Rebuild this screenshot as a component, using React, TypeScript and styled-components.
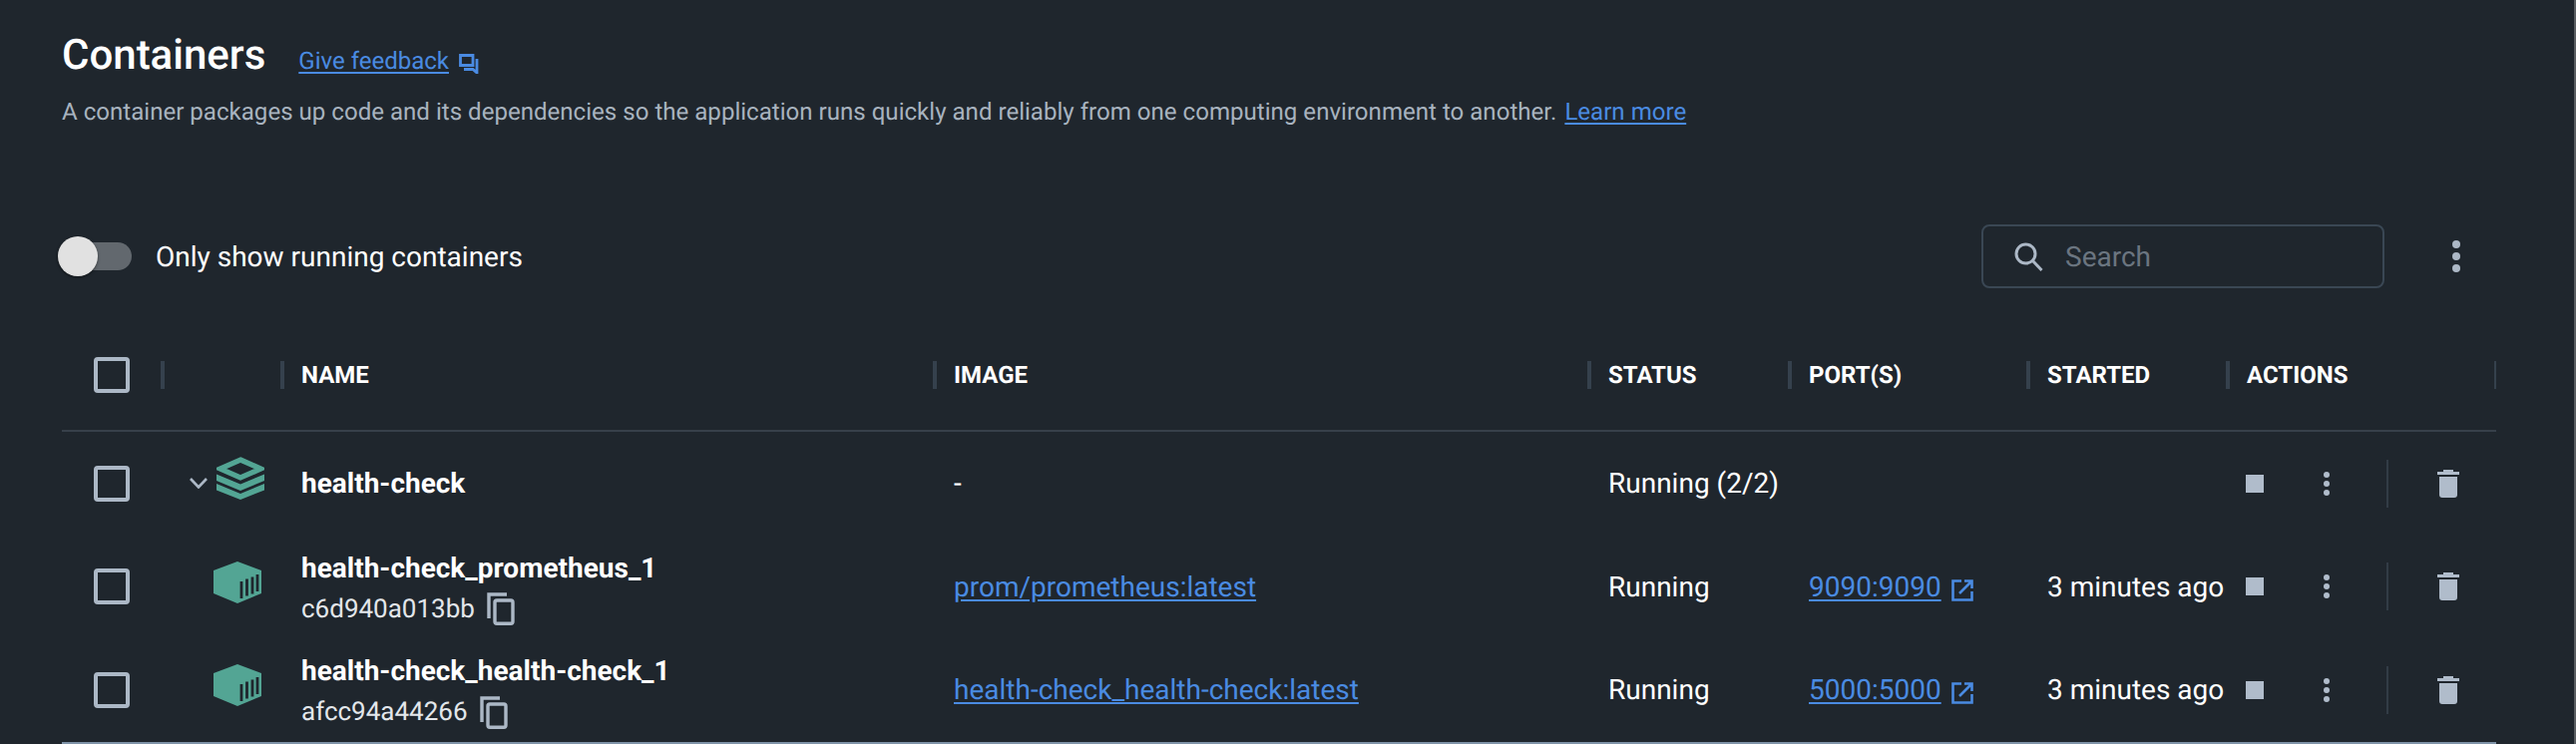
import React from 'react';
import styled, { createGlobalStyle } from 'styled-components';

const GlobalStyle = createGlobalStyle`
  html, body {
    margin: 0;
    padding: 0;
    background: #1f262d;
  }
  body {
    font-family: Roboto, "Liberation Sans", sans-serif;
    color: #fff;
    text-rendering: geometricPrecision;
  }
  * { box-sizing: border-box; }
`;

const COLUMNS = '99px 120px 654px 656px 201px 239px 200px 271px';

const Page = styled.div`
  width: 2582px;
  height: 746px;
  overflow: hidden;
  padding: 28px 82px 0 62px;
  border-right: 2px solid #5a5e62;
`;

const TitleRow = styled.div`
  display: flex;
  align-items: baseline;
  height: 56px;
`;

const Title = styled.h1`
  margin: 0;
  font-size: 42px;
  font-weight: 500;
  line-height: 56px;
`;

const BlueLink = styled.a`
  color: #4a8be2;
  text-decoration: underline;
  text-underline-offset: 3px;
`;

const FeedbackLink = styled(BlueLink)`
  margin-left: 33px;
  font-size: 24px;
`;

const InlineIcon = styled.svg`
  display: inline-block;
  flex: none;
  color: #4a8be2;
`;

const FeedbackIcon = styled(InlineIcon)`
  margin-left: 10px;
  align-self: flex-end;
  margin-bottom: 10px;
`;

const Description = styled.p`
  margin: 11px 0 0;
  font-size: 24.08px;
  line-height: 34px;
  color: #a8b3bf;
`;

const LearnMore = styled(BlueLink)`
  margin-left: 8px;
`;

const Toolbar = styled.div`
  display: flex;
  align-items: center;
  height: 64px;
  margin-top: 96px;
  padding-right: 16px;
`;

const ToggleTrack = styled.div`
  position: relative;
  width: 70px;
  height: 28px;
  border-radius: 14px;
  background: #62686e;
`;

const ToggleThumb = styled.div`
  position: absolute;
  left: -4px;
  top: -6px;
  width: 40px;
  height: 40px;
  border-radius: 50%;
  background: #e1e1e1;
  box-shadow: 0 1px 3px rgba(0, 0, 0, 0.5);
`;

const ToggleLabel = styled.span`
  margin-left: 24px;
  font-size: 28px;
`;

const SearchBox = styled.div`
  display: flex;
  align-items: center;
  width: 404px;
  height: 64px;
  margin-left: auto;
  padding-left: 31px;
  border: 2px solid #3a4754;
  border-radius: 8px;
`;

const SearchText = styled.span`
  margin-left: 22px;
  font-size: 28px;
  color: #6b7580;
`;

const MoreButton = styled.button`
  display: flex;
  align-items: center;
  justify-content: center;
  width: 40px;
  height: 64px;
  margin-left: 52px;
  padding: 0;
  border: 0;
  background: none;
  color: #acb8c6;
`;

const Row = styled.div<{ $last?: boolean }>`
  display: grid;
  grid-template-columns: ${COLUMNS};
  align-items: center;
  width: 2440px;
  height: ${(p) => (p.$last ? '107.5px' : '103.5px')};
  border-bottom: ${(p) => (p.$last ? '4px solid #7f93a8' : '0')};
`;

const HeadRow = styled(Row)`
  margin-top: 31px;
  height: 113px;
  border-bottom: 2px solid #37404a;
`;

const HeadCell = styled.div`
  display: flex;
  align-items: center;
  height: 28px;
  padding-left: 17px;
  border-left: 4px solid #35414d;
  font-size: 24px;
  font-weight: 700;
`;

const CheckCell = styled.div`
  display: flex;
  align-items: center;
  height: 100%;
  padding-left: 32px;
`;

const EndHead = styled(HeadCell)`
  position: relative;
  &::after {
    content: '';
    position: absolute;
    right: 0;
    top: 0;
    width: 2px;
    height: 28px;
    background: #35414d;
  }
`;

const Checkbox = styled.div`
  width: 36px;
  height: 36px;
  border: 4px solid #acb8c6;
  border-radius: 4px;
`;

const GroupIcons = styled.div`
  display: flex;
  align-items: center;
  justify-content: flex-end;
  gap: 9px;
  padding-right: 16px;
`;

const StackIcon = styled.svg`
  flex: none;
  margin-bottom: 11px;
`;

const BoxIcon = styled.div`
  display: flex;
  padding: 0 0 9px 53px;
`;

const Cell = styled.div`
  padding-left: 21px;
  font-size: 28px;
  white-space: nowrap;
`;

const NameCell = styled(Cell)`
  padding-top: 3px;
`;

const GroupName = styled(Cell)`
  font-weight: 700;
`;

const ContainerName = styled.div`
  font-size: 28px;
  font-weight: 700;
  line-height: 36px;
`;

const ContainerId = styled.div`
  display: flex;
  align-items: center;
  margin-top: 6px;
  font-size: 26px;
  line-height: 34px;
  color: #e3e7eb;
`;

const CopyIcon = styled.svg`
  flex: none;
  margin-left: 12px;
`;

const PortLink = styled(BlueLink)`
  font-size: 28px;
`;

const ExternalIcon = styled(InlineIcon)`
  margin-left: 10px;
  vertical-align: -5px;
`;

const ActionsCell = styled.div`
  display: flex;
  align-items: center;
  padding-left: 20px;
  color: #b0bccb;
`;

const StopIcon = styled.div`
  width: 18px;
  height: 18px;
  background: #b0bccb;
`;

const KebabSlot = styled.div`
  display: flex;
  justify-content: center;
  width: 36px;
  margin-left: 45px;
`;

const ActionDivider = styled.div`
  width: 2px;
  height: 48px;
  margin-left: 42px;
  background: #323c46;
`;

const TrashSlot = styled.div`
  display: flex;
  justify-content: center;
  width: 30px;
  margin-left: 45px;
`;

const Kebab = ({ size }: { size: number }) => (
  <svg width={size} height={size * 4} viewBox="0 0 8 32" fill="currentColor">
    <circle cx="4" cy="4" r="4" />
    <circle cx="4" cy="16" r="4" />
    <circle cx="4" cy="28" r="4" />
  </svg>
);

const Trash = () => (
  <svg width="22" height="28" viewBox="0 0 22 28" fill="currentColor">
    <path d="M6 0h10v2H6z" />
    <path d="M0 2h22v3H0z" />
    <path d="M2 7h18v18a3 3 0 0 1-3 3H5a3 3 0 0 1-3-3z" />
  </svg>
);

const Stack = () => (
  <StackIcon width="48" height="43" viewBox="0 0 48 43" fill="#53a594">
    <path fill="none" stroke="#53a594" strokeWidth="5.2" d="M24 3 44.500 12 24 21 3.500 12Z" />
    <path d="M0 17.500 24 27.500 48 17.500V24L24 34 0 24Z" />
    <path d="M0 27 24 37 48 27V33.500L24 43 0 33.500Z" />
  </StackIcon>
);

const Box = () => (
  <svg width="48" height="42" viewBox="0 0 48 42">
    <path fill="#53a594" d="M24 0 48 9V32L24 42 0 32V9Z" />
    <g stroke="#1f262d" strokeWidth="2.8">
      <path d="M28 20V37" />
      <path d="M33.500 17.500V34.500" />
      <path d="M39 15.500V32.500" />
      <path d="M44 13V30" />
    </g>
  </svg>
);

const Copy = () => (
  <CopyIcon width="28" height="33" viewBox="0 0 28 33" fill="none" stroke="#acb8c6" strokeWidth="3.4">
    <path d="M2 26V2H20" />
    <rect x="8" y="8" width="18" height="23.300" rx="2" />
  </CopyIcon>
);

const External = () => (
  <ExternalIcon width="22" height="22" viewBox="0 0 22 22" fill="none" stroke="currentColor" strokeWidth="2.6">
    <path d="M10 1.500H1.500V20.500H20.500V12" />
    <path d="M13 1.500H20.500V9M20.500 1.500 8 14" />
  </ExternalIcon>
);

const Actions = () => (
  <ActionsCell>
    <StopIcon />
    <KebabSlot>
      <Kebab size={6} />
    </KebabSlot>
    <ActionDivider />
    <TrashSlot>
      <Trash />
    </TrashSlot>
  </ActionsCell>
);

const containers = [
  { name: 'health-check_prometheus_1', id: 'c6d940a013bb', image: 'prom/prometheus:latest', port: '9090:9090' },
  { name: 'health-check_health-check_1', id: 'afcc94a44266', image: 'health-check_health-check:latest', port: '5000:5000' },
];

export default function App() {
  return (
    <Page>
      <GlobalStyle />
      <TitleRow>
        <Title>Containers</Title>
        <FeedbackLink href="#">Give feedback</FeedbackLink>
        <FeedbackIcon width="20" height="20" viewBox="0 0 20 20" fill="none" stroke="currentColor" strokeWidth="2.8">
          <path d="M1.500 1.500H14V11.500H1.500Z" />
          <path d="M18 5V19L14 15.500H5" />
        </FeedbackIcon>
      </TitleRow>
      <Description>
        A container packages up code and its dependencies so the application runs quickly and reliably from one computing environment to another.
        <LearnMore href="#">Learn more</LearnMore>
      </Description>
      <Toolbar>
        <ToggleTrack>
          <ToggleThumb />
        </ToggleTrack>
        <ToggleLabel>Only show running containers</ToggleLabel>
        <SearchBox>
          <svg width="29" height="29" viewBox="0 0 29 29" fill="none" stroke="#acb8c6" strokeWidth="3">
            <circle cx="11.500" cy="11.500" r="9.500" />
            <path d="M18 18 27.500 28" />
          </svg>
          <SearchText>Search</SearchText>
        </SearchBox>
        <MoreButton>
          <Kebab size={8} />
        </MoreButton>
      </Toolbar>
      <HeadRow>
        <CheckCell>
          <Checkbox />
        </CheckCell>
        <HeadCell />
        <HeadCell>NAME</HeadCell>
        <HeadCell>IMAGE</HeadCell>
        <HeadCell>STATUS</HeadCell>
        <HeadCell>PORT(S)</HeadCell>
        <HeadCell>STARTED</HeadCell>
        <EndHead>ACTIONS</EndHead>
      </HeadRow>
      <Row>
        <CheckCell>
          <Checkbox />
        </CheckCell>
        <GroupIcons>
          <svg width="18" height="11" viewBox="0 0 18 11" fill="none" stroke="#acb8c6" strokeWidth="2.6">
            <path d="M1 1 9 9.500 17 1" />
          </svg>
          <Stack />
        </GroupIcons>
        <GroupName>health-check</GroupName>
        <Cell>-</Cell>
        <Cell>Running (2/2)</Cell>
        <Cell />
        <Cell />
        <Actions />
      </Row>
      {containers.map((c, i) => (
        <Row key={c.id} $last={i === containers.length - 1}>
          <CheckCell>
            <Checkbox />
          </CheckCell>
          <BoxIcon>
            <Box />
          </BoxIcon>
          <NameCell>
            <ContainerName>{c.name}</ContainerName>
            <ContainerId>
              {c.id}
              <Copy />
            </ContainerId>
          </NameCell>
          <Cell>
            <BlueLink href="#">{c.image}</BlueLink>
          </Cell>
          <Cell>Running</Cell>
          <Cell>
            <PortLink href="#">{c.port}</PortLink>
            <External />
          </Cell>
          <Cell>3 minutes ago</Cell>
          <Actions />
        </Row>
      ))}
    </Page>
  );
}
